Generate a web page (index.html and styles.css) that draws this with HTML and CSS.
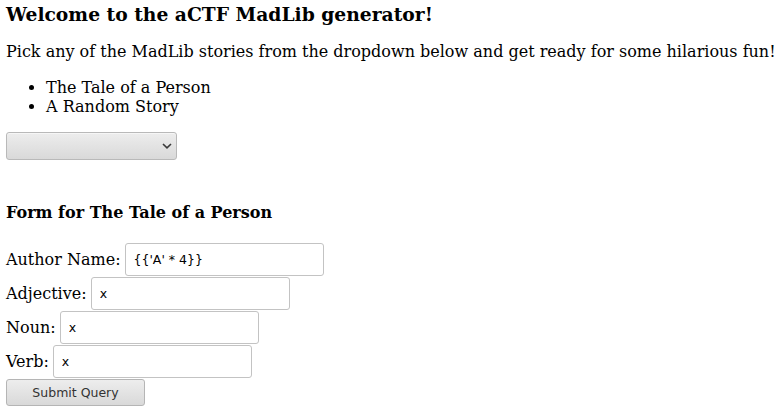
FILE: index.html
```html
<!DOCTYPE html>
<html>
<head>
<meta charset="utf-8">
<link rel="stylesheet" href="styles.css">
</head>
<body>
<h3 class="title">Welcome to the aCTF MadLib generator!</h3>
<p class="intro">Pick any of the MadLib stories from the dropdown below and get ready for some hilarious fun!</p>
<ul class="stories">
  <li>The Tale of a Person</li>
  <li>A Random Story</li>
</ul>
<div class="picker">
  <select class="select"><option></option></select>
  <svg class="chev" width="12" height="8" viewBox="0 0 12 8"><path d="M2 2 L6 5.8 L10 2" fill="none" stroke="#3a3a3a" stroke-width="1.6"/></svg>
</div>
<h4 class="form-title">Form for The Tale of a Person</h4>
<form class="form">
  <div class="row"><label>Author Name:</label><input class="field" type="text" value="{{'A' * 4}}"></div>
  <div class="row"><label>Adjective:</label><input class="field" type="text" value="x"></div>
  <div class="row"><label>Noun:</label><input class="field" type="text" value="x"></div>
  <div class="row"><label>Verb:</label><input class="field" type="text" value="x"></div>
  <button class="submit" type="button">Submit Query</button>
</form>
</body>
</html>
```
FILE: styles.css
```css
html, body {
  margin: 0;
  padding: 0;
  background: #ffffff;
}
body {
  padding: 0 6px;
  font-family: "DejaVu Serif", serif;
  font-size: 16px;
  color: #000;
}
.title {
  font-size: 18.72px;
  font-weight: bold;
  margin: 3px 0 0;
}
.intro {
  margin: 17px 0 0;
}
.stories {
  margin: 17px 0 0;
  padding-left: 40px;
}
.picker {
  position: relative;
  width: 171px;
  height: 28px;
  margin-top: 16px;
}
.select {
  appearance: none;
  -webkit-appearance: none;
  box-sizing: border-box;
  width: 171px;
  height: 28px;
  margin: 0;
  border: 1px solid #b9b9b9;
  border-radius: 3px;
  background: linear-gradient(#ededed, #d9d9d9);
  box-shadow: inset 0 1px 0 #f6f6f6;
}
.chev {
  position: absolute;
  left: 155px;
  top: 10px;
  pointer-events: none;
}
.form-title {
  font-size: 16px;
  font-weight: bold;
  margin: 43px 0 21px;
}
.form {
  display: flex;
  flex-direction: column;
  gap: 1px;
  margin: 0;
}
.row {
  display: flex;
  align-items: center;
  gap: 4px;
}
.field {
  box-sizing: border-box;
  width: 199px;
  height: 33px;
  margin: 0;
  padding: 0 8px;
  border: 1px solid #c3c3c3;
  border-radius: 3px;
  font-family: "DejaVu Sans", sans-serif;
  font-size: 12.5px;
  color: #000;
  background: #fff;
  outline: none;
}
.submit {
  appearance: none;
  -webkit-appearance: none;
  box-sizing: border-box;
  width: 139px;
  height: 27px;
  margin: 0;
  padding: 0;
  border: 1px solid #b5b5b5;
  border-radius: 3px;
  background: linear-gradient(#ededed, #d9d9d9);
  font-family: "DejaVu Sans", sans-serif;
  font-size: 12.5px;
  color: #333;
}
```
